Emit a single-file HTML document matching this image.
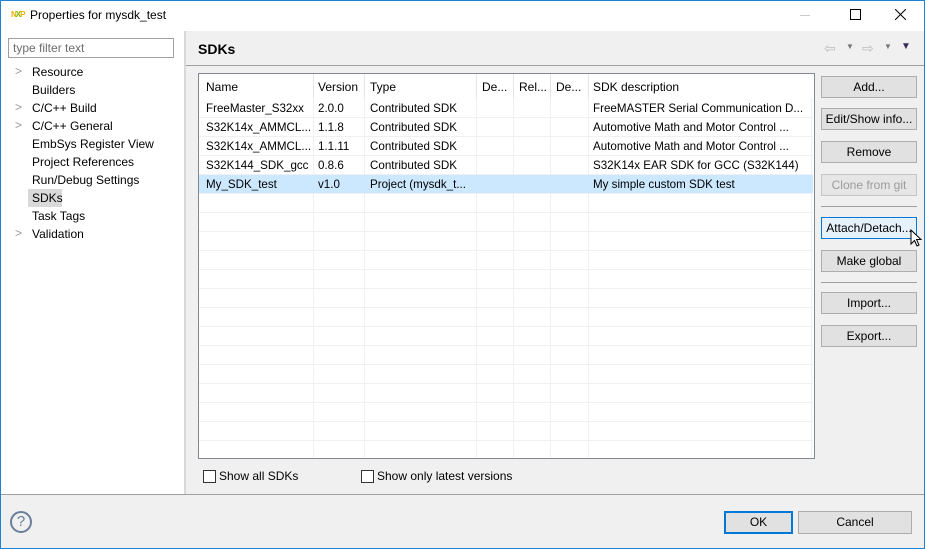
<!DOCTYPE html>
<html><head><style>
*{margin:0;padding:0;box-sizing:border-box}
body{width:925px;height:549px;position:relative;overflow:hidden;background:#f0f0f0;font-family:"Liberation Sans",sans-serif;font-size:12px;color:#000}
.a{position:absolute}
.btn{position:absolute;left:821px;width:96px;height:22px;background:#e1e1e1;border:1px solid #adadad;text-align:center;line-height:20px;font-size:12px}
.row{position:absolute;left:199px;width:614px;height:19px;border-bottom:1px solid #eef0f3}
.cell{position:absolute;top:1px;line-height:18px;white-space:nowrap;overflow:hidden;font-size:11.6px}
.vl{position:absolute;top:74px;width:1px;height:384px;background:#eef0f3}
.tree{position:absolute;left:32px;line-height:18px}
.chev{position:absolute;left:15px;color:#999;font-size:12px}
.cb{position:absolute;width:13px;height:13px;border:1px solid #333;background:#fff}
</style></head><body>
<div class="a" style="left:0;top:0;width:925px;height:31px;background:#fff"></div>
<div class="a" style="left:0;top:0;width:1px;height:549px;background:#1883d7"></div>
<div class="a" style="left:924px;top:0;width:1px;height:549px;background:#1883d7"></div>
<div class="a" style="left:0;top:548px;width:925px;height:1px;background:#1883d7"></div>
<div class="a" style="left:0;top:0;width:925px;height:1px;background:#1883d7"></div>
<div class="a" style="left:11px;top:10px;font-size:8px;font-weight:bold;color:#e8b000;letter-spacing:-1px">N<span style="color:#7ab800">X</span>P</div>
<div class="a" style="left:30px;top:8px;font-size:12px">Properties for mysdk_test</div>
<div class="a" style="left:800px;top:15px;width:10px;height:1px;background:#ccc"></div>
<div class="a" style="left:850px;top:9px;width:11px;height:11px;border:1px solid #000"></div>
<svg class="a" style="left:895px;top:9px" width="11" height="11"><path d="M0 0L11 11M11 0L0 11" stroke="#000" stroke-width="1"/></svg>

<div class="a" style="left:1px;top:31px;width:183px;height:463px;background:#fff"></div>
<div class="a" style="left:184px;top:31px;width:2px;height:463px;background:#d8d8d8"></div>
<div class="a" style="left:8px;top:38px;width:166px;height:20px;border:1px solid #a0a0a0;background:#fff;color:#6d6d6d;padding-left:4px;line-height:18px">type filter text</div>
<div class="chev" style="top:64px">&gt;</div><div class="tree" style="top:63px">Resource</div>
<div class="tree" style="top:81px">Builders</div>
<div class="chev" style="top:100px">&gt;</div><div class="tree" style="top:99px">C/C++ Build</div>
<div class="chev" style="top:118px">&gt;</div><div class="tree" style="top:117px">C/C++ General</div>
<div class="tree" style="top:135px">EmbSys Register View</div>
<div class="tree" style="top:153px">Project References</div>
<div class="tree" style="top:171px">Run/Debug Settings</div>
<div class="a" style="left:28px;top:189px;width:34px;height:18px;background:#d9d9d9"></div>
<div class="tree" style="top:189px">SDKs</div>
<div class="tree" style="top:207px">Task Tags</div>
<div class="chev" style="top:226px">&gt;</div><div class="tree" style="top:225px">Validation</div>

<div class="a" style="left:198px;top:41px;font-size:14px;font-weight:bold">SDKs</div>
<div class="a" style="left:824px;top:40px;color:#bbb;font-size:14px">⇦</div>
<div class="a" style="left:846px;top:42px;color:#777;font-size:8px">▼</div>
<div class="a" style="left:862px;top:40px;color:#bbb;font-size:14px">⇨</div>
<div class="a" style="left:884px;top:42px;color:#777;font-size:8px">▼</div>
<div class="a" style="left:901px;top:41px;color:#3a2a5a;font-size:10px">▼</div>
<div class="a" style="left:186px;top:65px;width:738px;height:1px;background:#a0a0a0"></div>

<div class="a" style="left:198px;top:73px;width:617px;height:386px;border:1px solid #828790;background:#fff"></div>
<div class="vl" style="left:313px"></div><div class="vl" style="left:364px"></div><div class="vl" style="left:476px"></div><div class="vl" style="left:513px"></div><div class="vl" style="left:550px"></div><div class="vl" style="left:588px"></div><div class="vl" style="left:811px"></div>
<div class="a" style="left:199px;top:74px;width:613px;height:24px;background:#fff"></div>
<div class="a" style="left:206px;top:80px">Name</div><div class="a" style="left:318px;top:80px">Version</div><div class="a" style="left:370px;top:80px">Type</div><div class="a" style="left:482px;top:80px">De...</div><div class="a" style="left:519px;top:80px">Rel...</div><div class="a" style="left:556px;top:80px">De...</div><div class="a" style="left:593px;top:80px">SDK description</div>
<div class="a" style="left:313px;top:74px;width:1px;height:24px;background:#e5e5e5"></div><div class="a" style="left:364px;top:74px;width:1px;height:24px;background:#e5e5e5"></div><div class="a" style="left:476px;top:74px;width:1px;height:24px;background:#e5e5e5"></div><div class="a" style="left:513px;top:74px;width:1px;height:24px;background:#e5e5e5"></div><div class="a" style="left:550px;top:74px;width:1px;height:24px;background:#e5e5e5"></div><div class="a" style="left:588px;top:74px;width:1px;height:24px;background:#e5e5e5"></div>

<div class="row" style="top:99px"><span class="cell" style="left:7px">FreeMaster_S32xx</span><span class="cell" style="left:119px">2.0.0</span><span class="cell" style="left:171px">Contributed SDK</span><span class="cell" style="left:394px">FreeMASTER Serial Communication D...</span></div>
<div class="row" style="top:118px"><span class="cell" style="left:7px">S32K14x_AMMCL...</span><span class="cell" style="left:119px">1.1.8</span><span class="cell" style="left:171px">Contributed SDK</span><span class="cell" style="left:394px">Automotive Math and Motor Control ...</span></div>
<div class="row" style="top:137px"><span class="cell" style="left:7px">S32K14x_AMMCL...</span><span class="cell" style="left:119px">1.1.11</span><span class="cell" style="left:171px">Contributed SDK</span><span class="cell" style="left:394px">Automotive Math and Motor Control ...</span></div>
<div class="row" style="top:156px"><span class="cell" style="left:7px">S32K144_SDK_gcc</span><span class="cell" style="left:119px">0.8.6</span><span class="cell" style="left:171px">Contributed SDK</span><span class="cell" style="left:394px">S32K14x EAR SDK for GCC (S32K144)</span></div>
<div class="row" style="top:175px;background:#cce8ff"><span class="cell" style="left:7px">My_SDK_test</span><span class="cell" style="left:119px">v1.0</span><span class="cell" style="left:171px">Project (mysdk_t...</span><span class="cell" style="left:394px">My simple custom SDK test</span></div>
<div class="row" style="top:194px"></div><div class="row" style="top:213px"></div><div class="row" style="top:232px"></div><div class="row" style="top:251px"></div><div class="row" style="top:270px"></div><div class="row" style="top:289px"></div><div class="row" style="top:308px"></div><div class="row" style="top:327px"></div><div class="row" style="top:346px"></div><div class="row" style="top:365px"></div><div class="row" style="top:384px"></div><div class="row" style="top:403px"></div><div class="row" style="top:422px"></div>

<div class="btn" style="top:76px">Add...</div>
<div class="btn" style="top:108px">Edit/Show info...</div>
<div class="btn" style="top:141px">Remove</div>
<div class="btn" style="top:174px;color:#9a9a9a;border-color:#c4c4c4;background:#e6e6e6">Clone from git</div>
<div class="a" style="left:821px;top:206px;width:96px;height:1px;background:#a0a0a0"></div>
<div class="btn" style="top:217px;background:#e5f1fb;border-color:#0078d7">Attach/Detach...</div>
<svg class="a" style="left:910px;top:229px" width="12" height="18"><path d="M1 1L1 15L4.5 11.5L7 17L9 16L6.5 10.5L11 10.5Z" fill="#fff" stroke="#000" stroke-width="1"/></svg>
<div class="btn" style="top:250px">Make global</div>
<div class="a" style="left:821px;top:282px;width:96px;height:1px;background:#a0a0a0"></div>
<div class="btn" style="top:292px">Import...</div>
<div class="btn" style="top:325px">Export...</div>

<div class="cb" style="left:203px;top:470px"></div><div class="a" style="left:219px;top:469px">Show all SDKs</div>
<div class="cb" style="left:361px;top:470px"></div><div class="a" style="left:377px;top:469px">Show only latest versions</div>

<div class="a" style="left:1px;top:494px;width:923px;height:1px;background:#a0a0a0"></div>
<div class="a" style="left:10px;top:511px;width:22px;height:22px;border:2px solid #6a7f99;border-radius:50%;text-align:center;line-height:18px;font-size:15px;color:#6a7f99">?</div>
<div class="a" style="left:724px;top:511px;width:69px;height:23px;border:2px solid #0078d7;background:#e1e1e1;text-align:center;line-height:19px">OK</div>
<div class="a" style="left:798px;top:511px;width:114px;height:23px;border:1px solid #adadad;background:#e1e1e1;text-align:center;line-height:21px">Cancel</div>
</body></html>
